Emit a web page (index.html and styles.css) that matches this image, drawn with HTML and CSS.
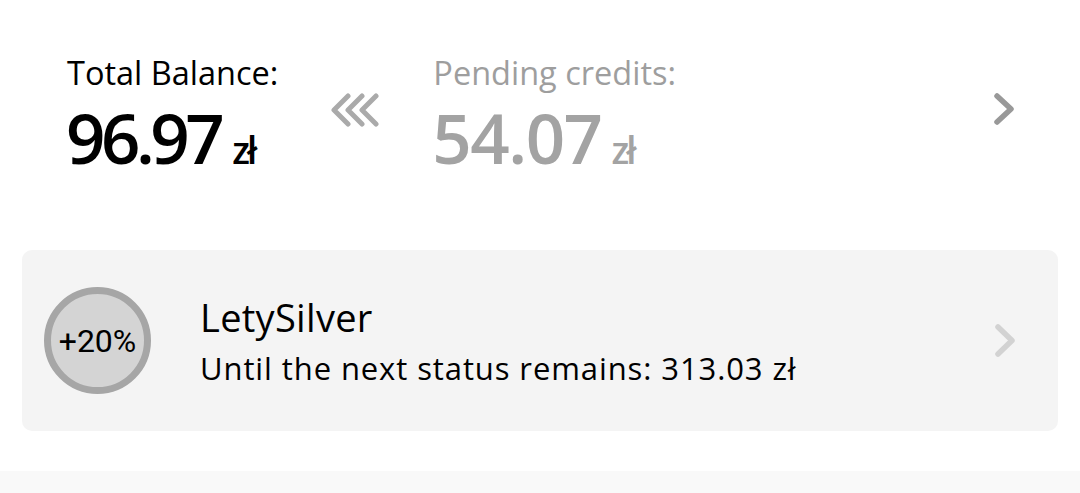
FILE: index.html
```html
<!DOCTYPE html>
<html>
<head>
<meta charset="utf-8">
<link rel="stylesheet" href="styles.css">
</head>
<body>
<div class="page">
  <section class="balances">
    <div class="bal total">
      <div class="label">Total Balance:</div>
      <div class="amount"><span class="num">96.97</span><span class="cur">zł</span></div>
    </div>
    <svg class="arrows" width="48" height="34" viewBox="0 0 48 34">
      <g fill="none" stroke="#aaaaaa" stroke-width="5" stroke-linecap="round" stroke-linejoin="round">
        <polyline points="17,3 3,17 17,31"/>
        <polyline points="31,3 17,17 31,31"/>
        <polyline points="45,3 31,17 45,31"/>
      </g>
    </svg>
    <div class="bal pending">
      <div class="label">Pending credits:</div>
      <div class="amount"><span class="num">54.07</span><span class="cur">zł</span></div>
    </div>
    <svg class="chev" width="20" height="32" viewBox="0 0 20 32">
      <polyline points="3,3 17,16 3,29" fill="none" stroke="#999999" stroke-width="5.5" stroke-linecap="round" stroke-linejoin="round"/>
    </svg>
  </section>
  <section class="card">
    <div class="badge">+20%</div>
    <div class="info">
      <div class="title">LetySilver</div>
      <div class="sub">Until the next status remains: 313.03 zł</div>
    </div>
    <svg class="chev" width="20" height="33" viewBox="0 0 20 33">
      <polyline points="3,3 17,16.5 3,30" fill="none" stroke="#d2d2d2" stroke-width="5.5" stroke-linecap="round" stroke-linejoin="round"/>
    </svg>
  </section>
  <div class="bottom"></div>
</div>
</body>
</html>
```
FILE: styles.css
```css
html, body { margin: 0; padding: 0; background: #fff; }
body { font-family: "Open Sans", sans-serif; color: #000; width: 1080px; height: 493px; overflow: hidden; }
.page { display: flex; flex-direction: column; }
.balances { display: flex; align-items: flex-start; padding: 53px 66px 0 67px; height: 200px; box-sizing: border-box; }
.bal { display: flex; flex-direction: column; }
.label { font-size: 32.5px; line-height: 40px; white-space: nowrap; }
.amount { display: flex; align-items: baseline; margin-top: 4px; line-height: 80px; }
.num { font-size: 69px; font-weight: 600; letter-spacing: -4.5px; margin-left: -1px; }
.cur { font-size: 37px; font-weight: 600; letter-spacing: -3px; margin-left: 12px; }
.pending { color: #a3a3a3; margin-left: 54px; }
.pending .num { letter-spacing: -1.5px; }
.pending .cur { margin-left: 10px; }
.pending .label { color: #9e9e9e; }
.arrows { margin-left: 53px; margin-top: 40px; }
.balances .chev { margin-left: auto; margin-top: 40px; }
.card { margin: 50px 22px 0; height: 181px; background: #f4f4f4; border-radius: 10px; display: flex; align-items: center; padding: 0 43px 0 22px; }
.badge { width: 93px; height: 93px; flex: none; border: 7px solid #a6a6a6; border-radius: 50%; background: #d4d4d4; display: flex; align-items: center; justify-content: center; font-family: Roboto, sans-serif; font-size: 32px; }
.info { margin-left: 49px; display: flex; flex-direction: column; }
.title { font-size: 38px; line-height: 46px; letter-spacing: 0.3px; }
.sub { font-size: 31px; line-height: 40px; letter-spacing: 0.9px; margin-top: 8px; }
.card .chev { margin-left: auto; }
.bottom { margin-top: 40px; height: 22px; background: #f9f9f9; }
```
